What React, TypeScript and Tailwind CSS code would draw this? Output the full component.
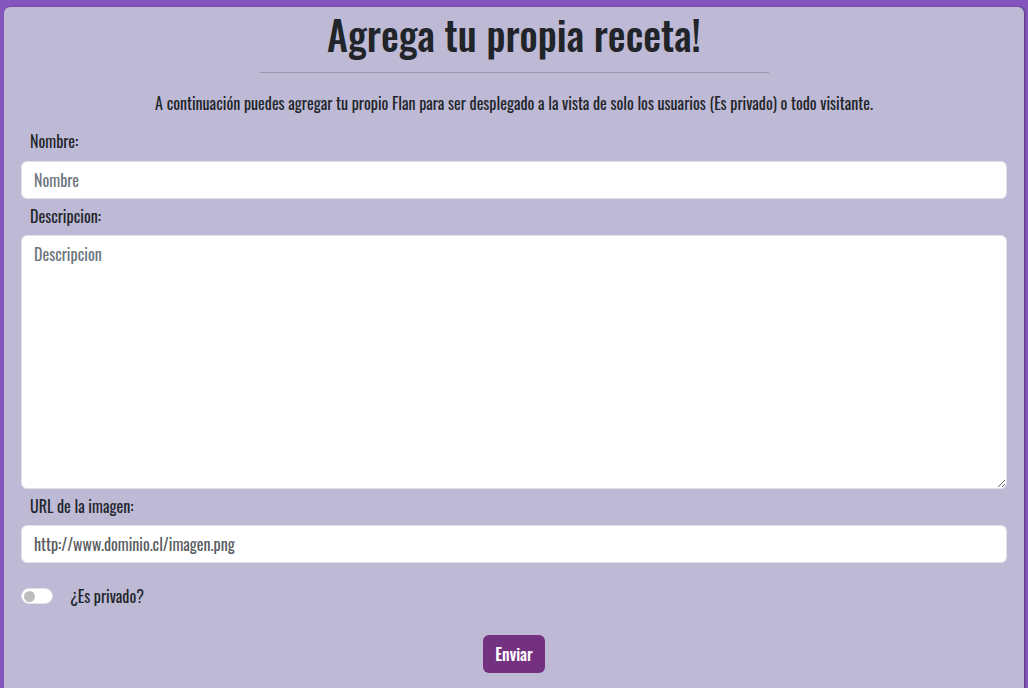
import { useState } from 'react'

export default function App() {
  const [isPrivate, setIsPrivate] = useState(false)

  return (
    <div className="min-h-screen bg-[#8455bc] pt-[7px] pl-[4px] pr-[4px] font-['Oswald',sans-serif] text-[#212529]">
      <div className="rounded-md bg-[#bebad6] px-[17px] pb-6 shadow-[1px_0_2px_rgba(0,0,0,0.35)]">
        <h1 className="pt-[3px] text-center text-[40px] font-medium leading-[48px]">Agrega tu propia receta!</h1>
        <hr className="mx-auto mt-[14px] w-[509px] border-t border-[#9b96ad]" />
        <p className="mt-[18px] mb-[8px] text-center text-[16px] leading-[24px]">
          A continuación puedes agregar tu propio Flan para ser desplegado a la vista de solo los usuarios (Es privado) o todo visitante.
        </p>

        <form className="flex flex-col" onSubmit={e => e.preventDefault()}>
          <label htmlFor="nombre" className="block pl-[9px] pt-[6px] pb-[8px] text-[16px] leading-[24px]">Nombre:</label>
          <input
            id="nombre"
            type="text"
            placeholder="Nombre"
            className="h-[38px] w-full rounded-md border border-[#dee2e6] bg-white px-[12px] text-[16px] placeholder:text-[#6c757d] outline-none"
          />

          <label htmlFor="descripcion" className="block pl-[9px] pt-[5px] pb-[7px] text-[16px] leading-[24px]">Descripcion:</label>
          <textarea
            id="descripcion"
            placeholder="Descripcion"
            className="h-[254px] w-full rounded-md border border-[#dee2e6] bg-white px-[12px] py-[6px] text-[16px] placeholder:text-[#6c757d] outline-none"
          />

          <label htmlFor="url" className="block pl-[9px] pt-[5px] pb-[7px] text-[16px] leading-[24px]">URL de la imagen:</label>
          <input
            id="url"
            type="text"
            placeholder="http://www.dominio.cl/imagen.png"
            className="h-[38px] w-full rounded-md border border-[#dee2e6] bg-white px-[12px] text-[16px] placeholder:text-[#595c5f] outline-none"
          />

          <div className="mt-[21px] flex items-center gap-[17px]">
            <button
              type="button"
              role="switch"
              aria-checked={isPrivate}
              onClick={() => setIsPrivate(v => !v)}
              className="flex h-[16px] w-[32px] items-center rounded-full border border-[#dee2e6] bg-white px-[2px]"
            >
              <span className="h-[11px] w-[11px] rounded-full bg-[#bdbdbd]" />
            </button>
            <span className="text-[16px] leading-[24px]">¿Es privado?</span>
          </div>

          <div className="mt-[27px] flex justify-center">
            <button type="submit" className="h-[38px] rounded-md bg-[#74317f] px-[12px] text-[16px] font-medium text-white">
              Enviar
            </button>
          </div>
        </form>
      </div>
    </div>
  )
}
